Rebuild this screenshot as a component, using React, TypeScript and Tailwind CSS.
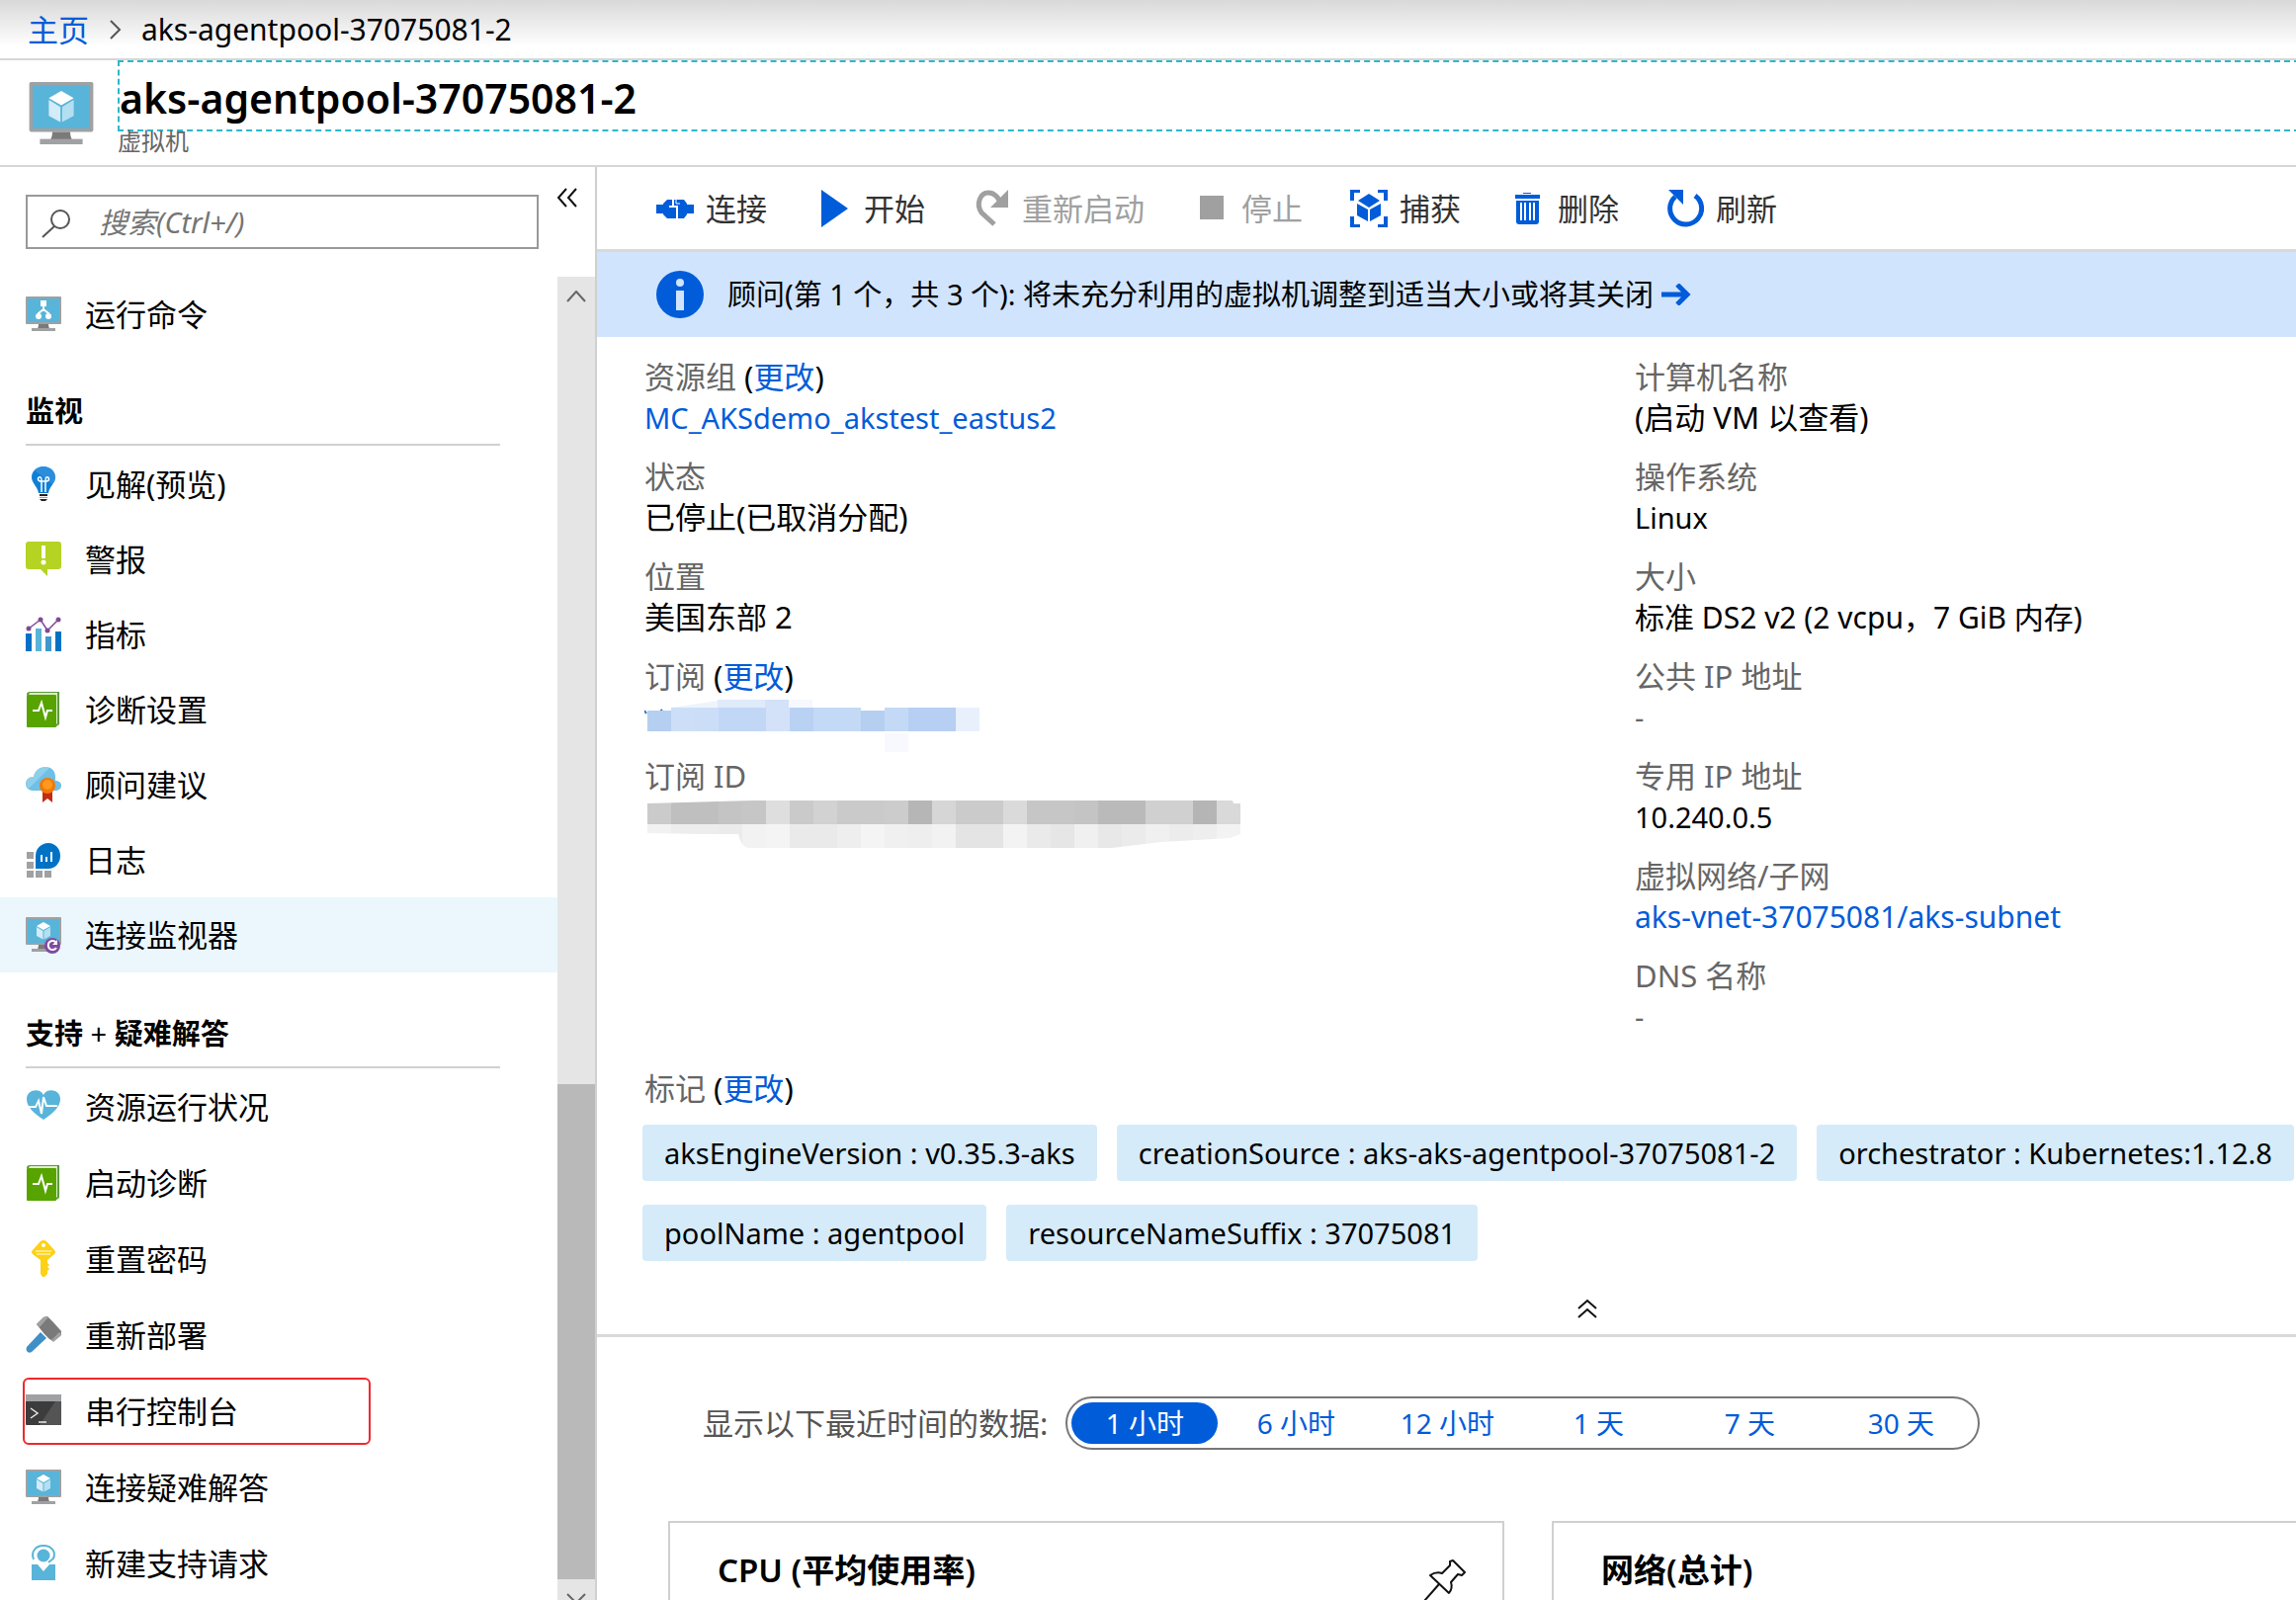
import type { ReactNode } from "react";

type IconProps = { className?: string };

/* ---------- Sidebar icons, all drawn on a 36x40 grid ---------- */

function MenuSvg({ children }: { children: ReactNode }) {
  return (
    <svg viewBox="0 0 36 40" className="w-9 h-10 shrink-0" aria-hidden="true">
      {children}
    </svg>
  );
}

function Monitor({ children }: { children?: ReactNode }) {
  return (
    <>
      <rect x="0" y="2" width="36" height="28" rx="1" fill="#a0a1a2" />
      <rect x="2" y="4" width="32" height="24" fill="#59b4d9" />
      <path d="M13 30h10c0 3 1 5 3 6H10c2-1 3-3 3-6z" fill="#7a7a7a" />
      <rect x="6" y="34" width="24" height="3" fill="#a0a1a2" />
      {children}
    </>
  );
}

function Cube() {
  return (
    <>
      <path d="M18 7l7 4-7 4-7-4z" fill="#fff" />
      <path d="M11 12l6.500 4v8.500L11 21z" fill="#d3ecf7" />
      <path d="M25 12l-6.500 4v8.500L25 21z" fill="#b4dff1" />
    </>
  );
}

const RunCommandIcon = () => (
  <MenuSvg>
    <Monitor>
      <rect x="15" y="6" width="6" height="6" fill="#fff" />
      <path d="M18 12v4M13 21v-2l5-4 5 4v2" stroke="#fff" strokeWidth="2" fill="none" />
      <circle cx="13" cy="22" r="3" fill="#fff" />
      <circle cx="23" cy="22" r="3" fill="#fff" />
    </Monitor>
  </MenuSvg>
);

const BulbIcon = () => (
  <MenuSvg>
    <path d="M18 2c7 0 12 5 12 11 0 6-6 9-7 16H13C12 22 6 19 6 13 6 7 11 2 18 2z" fill="#0f7fd6" />
    <path d="M18 2c7 0 12 5 12 11 0 3-1 5-3 7L9 6c2-3 5-4 9-4z" fill="#3d98df" opacity="0.6" />
    <path
      d="M16 28V17m4 11V17m-4 0c-5 0-4-5-1-4 1 0 1 2 1 4zm4 0c5 0 4-5 1-4-1 0-1 2-1 4zm-4 0h4"
      stroke="#fff"
      strokeWidth="1.500"
      fill="none"
    />
    <rect x="14" y="30" width="8" height="2" fill="#222" />
    <rect x="14" y="33" width="8" height="1" fill="#a99c8c" />
    <path d="M14 35h8l-2 2h-4z" fill="#222" />
  </MenuSvg>
);

const AlertIcon = () => (
  <MenuSvg>
    <path d="M3 2h30a3 3 0 0 1 3 3v22a3 3 0 0 1-3 3H22v7l-7-7H3a3 3 0 0 1-3-3V5a3 3 0 0 1 3-3z" fill="#b4d323" />
    <path d="M16 6h4v13h-4z" fill="#fff" />
    <circle cx="18" cy="23" r="2.500" fill="#fff" />
  </MenuSvg>
);

const MetricsIcon = () => (
  <MenuSvg>
    <rect x="0" y="19" width="6" height="18" fill="#0072c6" />
    <rect x="10" y="14" width="6" height="23" fill="#59b4d9" />
    <rect x="20" y="22" width="6" height="15" fill="#3f97cf" />
    <rect x="30" y="17" width="6" height="20" fill="#0072c6" />
    <path d="M3 14L15 5l7 11L33 5" stroke="#804998" strokeWidth="1.500" fill="none" />
    <circle cx="3" cy="14" r="2.500" fill="#804998" />
    <circle cx="15" cy="5" r="2.500" fill="#804998" />
    <circle cx="22" cy="16" r="2.500" fill="#804998" />
    <circle cx="33" cy="5" r="2.500" fill="#804998" />
  </MenuSvg>
);

const DiagnosticsIcon = () => (
  <MenuSvg>
    <path d="M4 2h30v33l-3 2V5H1c0-2 1-3 3-3z" fill="#5c9a3a" />
    <path d="M4 3h28v31l-1 1V5H3z" fill="#dfeecf" />
    <rect x="1" y="5" width="30" height="33" rx="1" fill="#57a300" />
    <path d="M7 21h6l3-8 4 15 2-7h5" stroke="#fff" strokeWidth="2" fill="none" />
  </MenuSvg>
);

const AdvisorIcon = () => (
  <MenuSvg>
    <path d="M7 26a7 7 0 0 1 0-14h1C9 6 14 2 20 2c6 0 10 4 10 10v4c8 0 8 10 0 10z" fill="#6fc0e4" />
    <path d="M20 2c-6 0-11 4-12 10H7a7 7 0 0 0-4 12L24 3c-1-1-3-1-4-1z" fill="#a5d9ef" opacity="0.6" />
    <path d="M17 27h10v11l-5-4-5 4z" fill="#c32b12" />
    <circle cx="22" cy="21" r="8" fill="#f0780a" />
    <circle cx="22" cy="20" r="5" fill="#ff981d" />
  </MenuSvg>
);

const LogsIcon = () => (
  <MenuSvg>
    <g fill="#a0a1a2">
      <rect x="1" y="12" width="7" height="7" />
      <rect x="1" y="22" width="7" height="7" />
      <rect x="1" y="31" width="7" height="7" />
      <rect x="10" y="31" width="7" height="7" />
      <rect x="19" y="31" width="7" height="7" />
    </g>
    <path d="M23 3a12 13 0 0 1 0 26H10V16A13 13 0 0 1 23 3z" fill="#0072c6" />
    <path d="M16 15v7M21 17v5M26 12v10" stroke="#fff" strokeWidth="2" />
  </MenuSvg>
);

const ConnectionMonitorIcon = () => (
  <MenuSvg>
    <Monitor>
      <Cube />
      <circle cx="27" cy="31" r="8" fill="#7f4aa0" />
      <path d="M31 33a4.500 4.500 0 1 1 0-5" stroke="#fff" strokeWidth="2" fill="none" />
      <path d="M32 25v5h-5z" fill="#fff" />
    </Monitor>
  </MenuSvg>
);

const HealthIcon = () => (
  <MenuSvg>
    <path d="M18 33C8 26 1 20 1 12c0-9 13-12 17-4 4-8 17-5 17 4 0 8-7 14-17 21z" fill="#59b4d9" />
    <path d="M3 20h7l3-6 3 13 2-17 3 9h11" stroke="#fff" strokeWidth="2" fill="none" />
  </MenuSvg>
);

const KeyIcon = () => (
  <MenuSvg>
    <path d="M15 2q3-2 6 0l8 9q2 2 0 4l-7 6v3l2 2-2 2 2 2-2 2v3l-3 3h-2l-2-3V21l-8-6q-2-2 0-4z" fill="#fcd116" />
    <path d="M10 12h16M11 15h14" stroke="#fff" strokeWidth="1" />
    <circle cx="18" cy="6" r="2" fill="#fff" />
  </MenuSvg>
);

const HammerIcon = () => (
  <MenuSvg>
    <path d="M15 17l6 6L6 37q-3 2-5-1-1-2 0-4z" fill="#3e90c7" />
    <path d="M11 9l7-7 4-1 3 3 3 3 8 9v4l-8 6-4-2-5-5z" fill="#7a7a7a" />
    <path d="M11 9l7-7 2-1 3 1-9 10zM26 25l8-8 2 1-1 3-7 6z" fill="#a0a1a2" />
  </MenuSvg>
);

const ConsoleIcon = () => (
  <MenuSvg>
    <rect x="0" y="3" width="36" height="31" rx="1" fill="#3c3c3c" />
    <path d="M30 10h6v24H14z" fill="#545454" />
    <path d="M0 4q0-1 1-1h34q1 0 1 1v6H0z" fill="#a0a1a2" />
    <path d="M5 17l7 5-7 5M13 31h8" stroke="#e8e8e8" strokeWidth="1.500" fill="none" />
  </MenuSvg>
);

const TroubleshootIcon = () => (
  <MenuSvg>
    <Monitor>
      <Cube />
    </Monitor>
  </MenuSvg>
);

const SupportIcon = () => (
  <MenuSvg>
    <path d="M8 16c-3-8 2-14 10-14s13 6 10 13l-5 4" stroke="#59b4d9" strokeWidth="2" fill="none" />
    <circle cx="18" cy="12" r="6.500" fill="#59b4d9" />
    <path d="M6 21h6l6 7 6-7h6v16H6z" fill="#59b4d9" />
  </MenuSvg>
);

/* ---------- Header and command bar icons ---------- */

function VmIcon({ className }: IconProps) {
  return (
    <svg viewBox="0 2 36 35" className={className} aria-hidden="true">
      <Monitor>
        <Cube />
      </Monitor>
    </svg>
  );
}

const barIcon = "w-[38px] h-[38px] shrink-0";

const ConnectIcon = () => (
  <svg viewBox="0 0 38 38" className={barIcon} fill="#015cda" aria-hidden="true">
    <path d="M0 15h7v-1l4-4h17l3 4v1h7v9h-7v1l-3 4H11l-4-4v-1H0z" />
    <path d="M17 9v8h-4M13 17h8v12" stroke="#fff" strokeWidth="2" fill="none" />
    <path d="M20 9v5h4" stroke="#fff" strokeWidth="1" fill="none" />
  </svg>
);

const StartIcon = () => (
  <svg viewBox="0 0 38 38" className={barIcon} fill="#015cda" aria-hidden="true">
    <path d="M7 0l27 19L7 38z" />
  </svg>
);

const RestartIcon = () => (
  <svg viewBox="0 0 38 38" className={barIcon} aria-hidden="true">
    <path d="M22 35L9 23C3 14 8 3 16 3c6 0 10 4 13 12" stroke="#a0a0a0" strokeWidth="5" fill="none" />
    <path d="M36 0v18H18z" fill="#a0a0a0" />
  </svg>
);

const StopIcon = () => (
  <svg viewBox="0 0 38 38" className={barIcon} aria-hidden="true">
    <rect x="8" y="6" width="24" height="24" fill="#a0a0a0" />
  </svg>
);

const CaptureIcon = () => (
  <svg viewBox="0 0 38 38" className={barIcon} fill="#015cda" aria-hidden="true">
    <path d="M0 0h10v3H4v8H0zM28 0h10v11h-4V3h-6zM0 27h4v8h6v3H0zM34 27h4v11H28v-3h6z" />
    <path d="M19 4l11 7-11 7L8 11zM7 14l11 6v12L7 26zM31 14l-11 6v12l11-6z" />
  </svg>
);

const DeleteIcon = () => (
  <svg viewBox="0 0 38 38" className={barIcon} fill="#015cda" aria-hidden="true">
    <path d="M15 3h8v1h-8zM7 5h25v4H7z" />
    <path d="M8 11h23v21q0 3-3 3H11q-3 0-3-3z" />
    <path d="M13 13v18M17 13v18M22 13v18M26 13v18" stroke="#fff" strokeWidth="2" />
  </svg>
);

const RefreshIcon = () => (
  <svg viewBox="0 0 38 38" className={barIcon} aria-hidden="true">
    <path d="M29 6a16 16 0 1 1-20 1" stroke="#015cda" strokeWidth="5" fill="none" />
    <path d="M2 0h15v15z" fill="#015cda" />
  </svg>
);

/* ---------- Data ---------- */

type MenuItem = { label: string; icon: () => ReactNode; active?: boolean; marked?: boolean };

const MONITOR_ITEMS: MenuItem[] = [
  { label: "见解(预览)", icon: BulbIcon },
  { label: "警报", icon: AlertIcon },
  { label: "指标", icon: MetricsIcon },
  { label: "诊断设置", icon: DiagnosticsIcon },
  { label: "顾问建议", icon: AdvisorIcon },
  { label: "日志", icon: LogsIcon },
  { label: "连接监视器", icon: ConnectionMonitorIcon, active: true },
];

const SUPPORT_ITEMS: MenuItem[] = [
  { label: "资源运行状况", icon: HealthIcon },
  { label: "启动诊断", icon: DiagnosticsIcon },
  { label: "重置密码", icon: KeyIcon },
  { label: "重新部署", icon: HammerIcon },
  { label: "串行控制台", icon: ConsoleIcon, marked: true },
  { label: "连接疑难解答", icon: TroubleshootIcon },
  { label: "新建支持请求", icon: SupportIcon },
];

const COMMANDS = [
  { label: "连接", icon: ConnectIcon },
  { label: "开始", icon: StartIcon },
  { label: "重新启动", icon: RestartIcon, disabled: true },
  { label: "停止", icon: StopIcon, disabled: true },
  { label: "捕获", icon: CaptureIcon },
  { label: "删除", icon: DeleteIcon },
  { label: "刷新", icon: RefreshIcon },
];

const TAGS = [
  "aksEngineVersion : v0.35.3-aks",
  "creationSource : aks-aks-agentpool-37075081-2",
  "orchestrator : Kubernetes:1.12.8",
  "poolName : agentpool",
  "resourceNameSuffix : 37075081",
];

const RANGES = ["1 小时", "6 小时", "12 小时", "1 天", "7 天", "30 天"];

const NAME_BLOCKS = [
  "#b4cff0", "#cddff8", "#cbddf7", "#c2d7f6", "#c2d7f6", "#d3e2f8", "#b9d1f3",
  "#c4d9f6", "#c4d9f6", "#b5cff1", "#c4d9f6", "#b6cff2", "#b6cff2", "#e8f0fc",
];

const ID_BLOCKS = [
  "#cbcbcb", "#bfbfbf", "#bfbfbf", "#c4c4c4", "#c6c6c6", "#dedede", "#cacaca", "#d2d2d2", "#cacaca",
  "#cacaca", "#cccccc", "#b6b6b6", "#d6d6d6", "#cbcbcb", "#cbcbcb", "#dadada", "#c6c6c6", "#c6c6c6",
  "#c4c4c4", "#bababa", "#bababa", "#d0d0d0", "#d0d0d0", "#b5b5b5", "#d9d9d9",
];

const ID_LOWER_BLOCKS = [
  "#f2f2f2", "#ededed", "#ededed", "#ebebeb", "#f2f2f2", "#f4f4f4", "#eaeaea", "#eaeaea", "#eeeeee",
  "#f4f4f4", "#f0f0f0", "#eeeeee", "#f2f2f2", "#e4e4e4", "#e4e4e4", "#f3f3f3", "#eaeaea", "#e6e6e6",
  "#f0f0f0", "#e8e8e8", "#ebebeb", "#f0f0f0", "#ececec", "#eeeeee", "#f3f3f3",
];

/* ---------- Pieces ---------- */

function MenuList({ items, className = "" }: { items: MenuItem[]; className?: string }) {
  return (
    <ul className={className}>
      {items.map((item) => (
        <li key={item.label} className="relative">
          <a
            href="#"
            className={`flex items-center gap-6 h-[76px] pl-[26px] text-[31px] leading-10 ${
              item.active ? "bg-[#ebf7fd]" : ""
            }`}
          >
            <item.icon />
            <span>{item.label}</span>
          </a>
          {item.marked && (
            <span className="absolute left-[23px] top-1 w-[352px] h-[68px] border-2 border-[#f0282d] rounded-md pointer-events-none" />
          )}
        </li>
      ))}
    </ul>
  );
}

function MenuHeading({ children }: { children: ReactNode }) {
  return (
    <h2 className="ml-[26px] mr-[58px] pt-[34px] h-[95px] border-b-2 border-[#d0d0d0] text-[29px] leading-[52px] font-bold">
      {children}
    </h2>
  );
}

function Field({ label, change, children }: { label: string; change?: boolean; children: ReactNode }) {
  return (
    <div className="leading-[41px]">
      <dt className="text-[31px] text-[#666]">
        {label}
        {change && <ChangeLink />}
      </dt>
      <dd className="text-[29px] h-[41px]">{children}</dd>
    </div>
  );
}

function ChangeLink() {
  return (
    <span className="text-black">
      {" "}
      (<a href="#" className="text-[#015cda]">更改</a>)
    </span>
  );
}

function HiddenName() {
  return (
    <svg viewBox="0 0 340 56" className="w-[340px] h-14" aria-hidden="true">
      <path d="M0 14l2 3M16 15l2-2" stroke="#2f6fc4" strokeWidth="2" />
      <path d="M27 11L74 4v8H27z" fill="#eef4fc" />
      <rect x="74" y="3" width="48" height="9" fill="#dfeafa" />
      <rect x="122" y="3" width="24" height="9" fill="#d3e2f8" />
      <rect x="146" y="3" width="24" height="9" fill="#f5f8fd" />
      {NAME_BLOCKS.map((fill, i) => (
        <rect key={i} x={3 + i * 24} y={i === 0 || i === 9 ? 14 : 11} width="24" height={i === 0 || i === 9 ? 21 : 24} fill={fill} />
      ))}
      <rect x="243" y="37" width="24" height="19" fill="#f7f9fe" />
    </svg>
  );
}

function HiddenId() {
  return (
    <svg viewBox="0 0 604 52" className="w-[604px] h-[52px]" aria-hidden="true">
      <clipPath id="id-shape">
        <path d="M3 7L110 4h485l1 3h7v31l-10 4-70 4-50 6H105q-7-1-10-14L60 38l-57-1z" />
      </clipPath>
      <g clipPath="url(#id-shape)">
        {ID_BLOCKS.map((fill, i) => (
          <rect key={i} x={3 + i * 24} y="2" width="24" height="26" fill={fill} />
        ))}
        {ID_LOWER_BLOCKS.map((fill, i) => (
          <rect key={i} x={3 + i * 24} y="28" width="24" height="24" fill={fill} />
        ))}
      </g>
    </svg>
  );
}

function Sidebar() {
  return (
    <aside className="w-[604px] shrink-0 border-r-2 border-[#d0d0d0] flex flex-col">
      <div className="flex items-start pt-7 pl-[26px] h-[111px] shrink-0">
        <label className="flex items-center w-[519px] h-[55px] border-2 border-[#999] pl-[14px]">
          <svg viewBox="0 0 30 32" className="w-[30px] h-8 shrink-0" fill="none" stroke="#555" strokeWidth="2" aria-hidden="true">
            <circle cx="19" cy="13" r="9" />
            <path d="M13 20L1 31" />
          </svg>
          <input
            type="text"
            aria-label="搜索"
            placeholder="搜索(Ctrl+/)"
            className="flex-1 min-w-0 ml-7 text-[29px] leading-10 italic outline-none placeholder:text-[#757575]"
          />
        </label>
        <button type="button" aria-label="折叠菜单" className="ml-[18px] -mt-[7px]">
          <svg viewBox="0 0 22 20" className="w-[22px] h-5" fill="none" stroke="#111" strokeWidth="2" aria-hidden="true">
            <path d="M10 1L2 10l8 9M20 1l-8 9 8 9" />
          </svg>
        </button>
      </div>

      <div className="flex flex-1 min-h-0">
        <nav className="flex-1 min-w-0 overflow-hidden">
          <MenuList items={[{ label: "运行命令", icon: RunCommandIcon }]} />
          <MenuHeading>监视</MenuHeading>
          <MenuList items={MONITOR_ITEMS} className="pt-px pb-[2px]" />
          <MenuHeading>
            支持 <span className="font-normal">+</span> 疑难解答
          </MenuHeading>
          <MenuList items={SUPPORT_ITEMS} className="pt-px space-y-px" />
        </nav>

        {/* Scrollbar */}
        <div className="w-[38px] shrink-0 bg-[#e5e5e5] flex flex-col items-center overflow-hidden">
          <svg viewBox="0 0 20 12" className="w-5 h-3 mt-[14px] shrink-0" fill="none" stroke="#666" strokeWidth="2" aria-hidden="true">
            <path d="M1 11l9-10 9 10" />
          </svg>
          <div className="flex-1" />
          <div className="w-full h-[501px] shrink-0 bg-[#b9b9b9]" />
          <svg viewBox="0 0 20 21" className="w-5 h-[21px] shrink-0" fill="none" stroke="#666" strokeWidth="2" aria-hidden="true">
            <path d="M1 15l9 9 9-9" />
          </svg>
        </div>
      </div>
    </aside>
  );
}

function Essentials() {
  return (
    <section>
      <div className="grid grid-cols-2 pt-5">
        <dl className="pl-12 space-y-[19px]">
          <Field label="资源组" change>
            <a href="#" className="text-[#015cda]">MC_AKSdemo_akstest_eastus2</a>
          </Field>
          <Field label="状态">
            <span className="text-[31px]">已停止(已取消分配)</span>
          </Field>
          <Field label="位置">
            <span className="text-[31px]">美国东部 2</span>
          </Field>
          <Field label="订阅" change>
            <HiddenName />
          </Field>
          <Field label="订阅 ID">
            <HiddenId />
          </Field>
        </dl>
        <dl className="pl-12 space-y-[19px]">
          <Field label="计算机名称">
            <span className="text-[31px]">(启动 VM 以查看)</span>
          </Field>
          <Field label="操作系统">Linux</Field>
          <Field label="大小">
            <span className="text-[30px]">标准 DS2 v2 (2 vcpu，7 GiB 内存)</span>
          </Field>
          <Field label="公共 IP 地址">
            <span className="text-[#666]">-</span>
          </Field>
          <Field label="专用 IP 地址">10.240.0.5</Field>
          <Field label="虚拟网络/子网">
            <a href="#" className="text-[30px] text-[#015cda]">aks-vnet-37075081/aks-subnet</a>
          </Field>
          <Field label="DNS 名称">
            <span className="text-[#666]">-</span>
          </Field>
        </dl>
      </div>

      {/* Tags */}
      <div className="pt-8 px-[46px]">
        <p className="pl-[2px] text-[31px] leading-[41px] text-[#666]">
          标记
          <ChangeLink />
        </p>
        <ul className="flex flex-wrap gap-x-5 gap-y-6 mt-4">
          {TAGS.map((tag) => (
            <li key={tag} className="bg-[#d5ebf9] rounded px-[22px] h-[57px] text-[29px] leading-[57px]">
              {tag}
            </li>
          ))}
        </ul>
      </div>

      <div className="flex justify-center pt-[38px] pb-4 border-b-[3px] border-[#d9d9d9]">
        <button type="button" aria-label="收起">
          <svg viewBox="0 0 20 20" className="w-5 h-5" fill="none" stroke="#111" strokeWidth="2" aria-hidden="true">
            <path d="M1 10l9-8 9 8M1 19l9-8 9 8" />
          </svg>
        </button>
      </div>
    </section>
  );
}

function ChartCard({ title }: { title: string }) {
  return (
    <article className="w-[846px] h-[500px] shrink-0 border-2 border-[#d0d0d0] px-12 pt-6 flex justify-between items-start">
      <h3 className="text-[33px] leading-[48px] font-semibold">{title}</h3>
      <button type="button" aria-label="固定" className="mt-3 -mr-3">
        <svg viewBox="0 0 44 44" className="w-11 h-11" fill="none" stroke="#111" strokeWidth="2" strokeLinejoin="round" aria-hidden="true">
          <path d="M30 2l12 12-3 3-4-1-7 8q2 6-2 11L7 17q6-4 12-2l8-8V3z" />
          <path d="M16 26L1 43" />
        </svg>
      </button>
    </article>
  );
}

function Monitoring() {
  return (
    <section className="pt-[60px]">
      <div className="flex items-center gap-[18px] pl-[107px]">
        <span className="text-[31px] leading-[54px] text-[#555]">显示以下最近时间的数据:</span>
        <div role="group" aria-label="时间范围" className="flex gap-[5px] h-[54px] p-1 border-2 border-[#777] rounded-full">
          {RANGES.map((range, i) => (
            <button
              key={range}
              type="button"
              className={`w-[148px] rounded-full text-[28px] leading-[42px] ${
                i === 0 ? "bg-[#015cda] text-white" : "text-[#015cda]"
              }`}
            >
              {range}
            </button>
          ))}
        </div>
      </div>
      <div className="flex gap-12 pl-[72px] pt-[72px]">
        <ChartCard title="CPU (平均使用率)" />
        <ChartCard title="网络(总计)" />
      </div>
    </section>
  );
}

export default function App() {
  return (
    <div className="h-screen flex flex-col overflow-hidden bg-white text-black font-['Noto_Sans','Noto_Sans_CJK_SC',sans-serif]">
      {/* Breadcrumb */}
      <nav className="flex items-center h-[61px] shrink-0 pl-7 border-b-2 border-[#d6d6d6] bg-linear-to-b from-[#d9d9d9] to-white to-80%">
        <a href="#" className="text-[31px] leading-10 text-[#015cda]">主页</a>
        <svg viewBox="0 0 12 20" className="w-3 h-5 ml-[21px] mr-5" fill="none" stroke="#555" strokeWidth="2" aria-hidden="true">
          <path d="M1 1l9 9-9 9" />
        </svg>
        <span className="text-[30px] leading-10">aks-agentpool-37075081-2</span>
      </nav>

      {/* Resource header */}
      <header className="flex h-[108px] shrink-0 pl-[29px] border-b-2 border-[#d6d6d6]">
        <VmIcon className="w-[66px] h-[63px] mt-[22px] shrink-0" />
        <div className="flex-1 ml-6 min-w-0 overflow-hidden">
          <h1 className="-mr-1 h-[72px] border-2 border-dashed border-[#2fb7cc] text-[41px] leading-[72px] font-semibold">
            aks-agentpool-37075081-2
          </h1>
          <p className="-mt-1 text-[24px] leading-7 text-[#666]">虚拟机</p>
        </div>
      </header>

      <div className="flex flex-1 min-h-0">
        <Sidebar />
        <main className="flex-1 min-w-0 overflow-hidden">
          <div className="min-w-[2004px]">
            <div className="flex items-start gap-12 pl-[60px] pt-5 h-[86px] border-b-[3px] border-[#d9d9d9]">
              {COMMANDS.map((command) => (
                <button
                  key={command.label}
                  type="button"
                  disabled={command.disabled}
                  className={`flex items-center gap-3 text-[31px] leading-[44px] ${
                    command.disabled ? "text-[#a0a0a0]" : "text-[#323232]"
                  }`}
                >
                  <command.icon />
                  <span>{command.label}</span>
                </button>
              ))}
            </div>

            <a href="#" className="flex items-center h-[86px] pl-[60px] bg-[#d0e4fe]">
              <svg viewBox="0 0 48 48" className="w-12 h-12 shrink-0" aria-hidden="true">
                <circle cx="24" cy="24" r="24" fill="#015cda" />
                <circle cx="24" cy="12" r="4" fill="#d0e4fe" />
                <rect x="20" y="20" width="8" height="20" fill="#d0e4fe" />
              </svg>
              <span className="ml-6 text-[29px] leading-10">
                顾问(第 1 个，共 3 个): 将未充分利用的虚拟机调整到适当大小或将其关闭
              </span>
              <svg viewBox="0 0 30 22" className="w-[30px] h-[22px] ml-2 shrink-0" fill="none" stroke="#015cda" strokeWidth="5" aria-hidden="true">
                <path d="M0 11h26M16 1l10 10-10 10" />
              </svg>
            </a>

            <Essentials />
            <Monitoring />
          </div>
        </main>
      </div>
    </div>
  );
}
